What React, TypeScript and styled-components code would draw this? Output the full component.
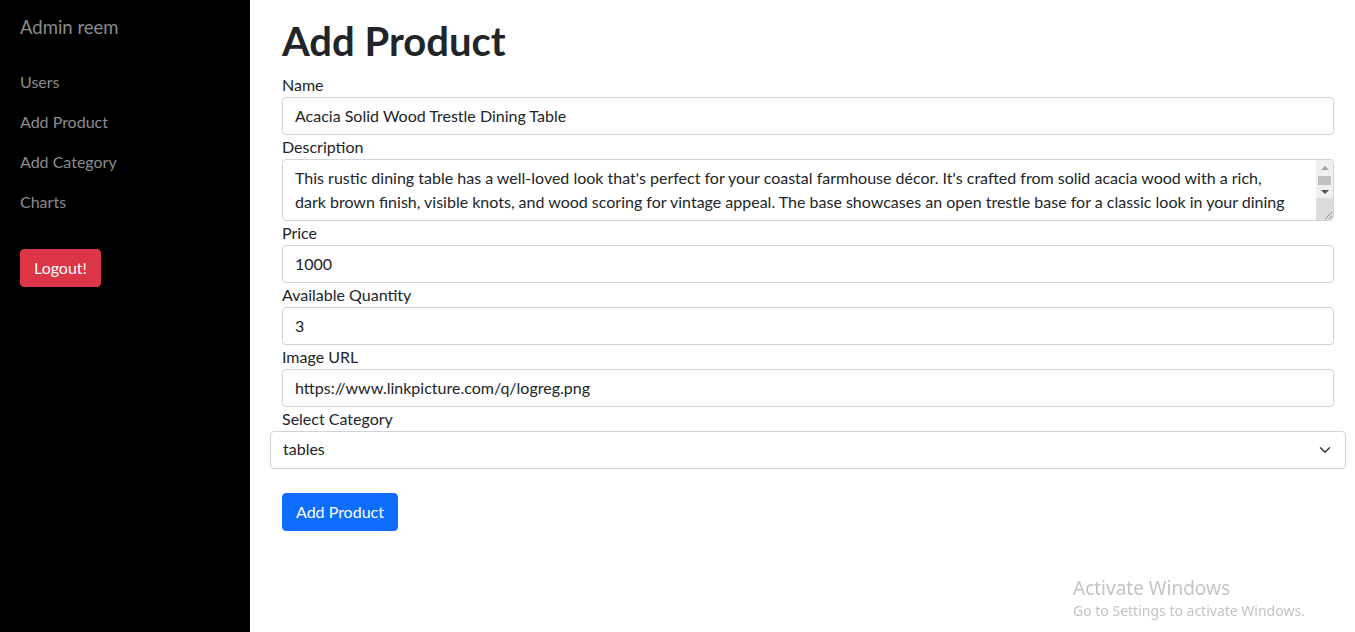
import React from "react";
import styled, { createGlobalStyle } from "styled-components";

const Global = createGlobalStyle`
  * { box-sizing: border-box; }
  html, body { margin: 0; padding: 0; }
  body {
    font-family: "Lato", "Noto Sans", sans-serif;
    font-size: 16px;
    line-height: 24px;
    color: #212529;
    background: #fff;
  }
`;

const Layout = styled.div`
  display: flex;
  min-height: 632px;
`;

const Sidebar = styled.aside`
  width: 250px;
  flex: 0 0 250px;
  background: #000;
  padding: 12px 20px 0 20px;
  display: flex;
  flex-direction: column;
  align-items: flex-start;
`;

const Brand = styled.div`
  font-size: 18.5px;
  line-height: 30px;
  color: #8c8c8c;
  margin-bottom: 20px;
`;

const NavLink = styled.a`
  display: block;
  color: #8c8c8c;
  text-decoration: none;
  padding: 8px 0;
  line-height: 24px;
`;

const Button = styled.button<{ $variant: "danger" | "primary" }>`
  font: inherit;
  line-height: 24px;
  padding: 6px 13px;
  border: 1px solid ${(p) => (p.$variant === "danger" ? "#dc3545" : "#0d6efd")};
  background: ${(p) => (p.$variant === "danger" ? "#dc3545" : "#0d6efd")};
  color: #fff;
  border-radius: 4px;
  cursor: pointer;
`;

const LogoutWrap = styled.div`
  margin-top: 27px;
`;

const Main = styled.main`
  flex: 1;
  padding: 17px 21px 0 32px;
`;

const Title = styled.h1`
  font-size: 40px;
  line-height: 48px;
  font-weight: 700;
  margin: 0 0 8px;
  color: #212529;
`;

const Label = styled.label`
  display: block;
  line-height: 24px;
`;

const Input = styled.input`
  display: block;
  width: 100%;
  height: 38px;
  padding: 5px 12px 7px;
  font: inherit;
  line-height: 24px;
  color: #212529;
  border: 1px solid #ced4da;
  border-radius: 4px;
  background: #fff;
`;

const TextAreaWrap = styled.div`
  position: relative;
`;

const TextArea = styled.textarea`
  display: block;
  width: 100%;
  height: 62px;
  padding: 6px 39px 6px 12px;
  font: inherit;
  line-height: 24px;
  color: #212529;
  border: 1px solid #ced4da;
  border-radius: 4px;
  resize: none;
  overflow: hidden;
`;

const ScrollBar = styled.div`
  position: absolute;
  top: 1px;
  right: 1px;
  bottom: 1px;
  width: 17px;
  display: flex;
  flex-direction: column;
  background: #f0f0f0;
  border-top-right-radius: 3px;
  border-bottom-right-radius: 3px;
  overflow: hidden;
  pointer-events: none;
`;

const ScrollButton = styled.div<{ $h: number }>`
  height: ${(p) => p.$h}px;
  display: flex;
  align-items: center;
  justify-content: center;
`;

const Thumb = styled.div`
  height: 9px;
  margin: 0 2px;
  background: #c1c1c1;
`;

const Corner = styled.div`
  flex: 1;
  background: #dcdcdc;
  display: flex;
  align-items: flex-end;
  justify-content: flex-end;
`;

const SelectRow = styled.div`
  margin: 0 -12px;
  position: relative;
`;

const Select = styled.select`
  display: block;
  width: 100%;
  height: 38px;
  padding: 5px 36px 7px 12px;
  font: inherit;
  line-height: 24px;
  color: #212529;
  border: 1px solid #ced4da;
  border-radius: 4px;
  background: #fff;
  appearance: none;
`;

const Chevron = styled.svg`
  position: absolute;
  right: 15px;
  top: 13px;
  pointer-events: none;
`;

const Actions = styled.div`
  margin-top: 24px;
`;

const Watermark = styled.div`
  position: fixed;
  left: 1073px;
  top: 575px;
  color: #c4c4c4;
  font-family: "Noto Sans", sans-serif;
`;

const WmTitle = styled.div`
  font-size: 19px;
  line-height: 26px;
`;

const WmSub = styled.div`
  font-size: 14px;
  line-height: 20px;
`;

const description =
  "This rustic dining table has a well-loved look that's perfect for your coastal farmhouse décor. It's crafted from solid acacia wood with a rich, dark brown finish, visible knots, and wood scoring for vintage appeal. The base showcases an open trestle base for a classic look in your dining room, while the rectangular tabletop seats up to six people.";

export default function App() {
  return (
    <>
      <Global />
      <Layout>
        <Sidebar>
          <Brand>Admin reem</Brand>
          <NavLink href="#">Users</NavLink>
          <NavLink href="#">Add Product</NavLink>
          <NavLink href="#">Add Category</NavLink>
          <NavLink href="#">Charts</NavLink>
          <LogoutWrap>
            <Button $variant="danger">Logout!</Button>
          </LogoutWrap>
        </Sidebar>
        <Main>
          <Title>Add Product</Title>
          <Label>Name</Label>
          <Input defaultValue="Acacia Solid Wood Trestle Dining Table" />
          <Label>Description</Label>
          <TextAreaWrap>
            <TextArea defaultValue={description} />
            <ScrollBar>
              <ScrollButton $h={16}>
                <svg width="8" height="4" viewBox="0 0 8 4">
                  <path d="M0 4h8L4 0z" fill="#a3a3a3" />
                </svg>
              </ScrollButton>
              <Thumb />
              <ScrollButton $h={13}>
                <svg width="8" height="4" viewBox="0 0 8 4">
                  <path d="M0 0h8L4 4z" fill="#505050" />
                </svg>
              </ScrollButton>
              <Corner>
                <svg width="10" height="10" viewBox="0 0 10 10">
                  <path d="M9 2 2 9M9 6 6 9" stroke="#8a8a8a" strokeWidth="1" />
                </svg>
              </Corner>
            </ScrollBar>
          </TextAreaWrap>
          <Label>Price</Label>
          <Input defaultValue="1000" />
          <Label>Available Quantity</Label>
          <Input defaultValue="3" />
          <Label>Image URL</Label>
          <Input defaultValue="https://www.linkpicture.com/q/logreg.png" />
          <Label>Select Category</Label>
          <SelectRow>
            <Select defaultValue="tables">
              <option value="tables">tables</option>
              <option value="chairs">chairs</option>
            </Select>
            <Chevron width="12" height="12" viewBox="0 0 16 16">
              <path d="m2 5 6 6 6-6" fill="none" stroke="#343a40" strokeWidth="2" strokeLinecap="round" strokeLinejoin="round" />
            </Chevron>
          </SelectRow>
          <Actions>
            <Button $variant="primary">Add Product</Button>
          </Actions>
        </Main>
      </Layout>
      <Watermark>
        <WmTitle>Activate Windows</WmTitle>
        <WmSub>Go to Settings to activate Windows.</WmSub>
      </Watermark>
    </>
  );
}
